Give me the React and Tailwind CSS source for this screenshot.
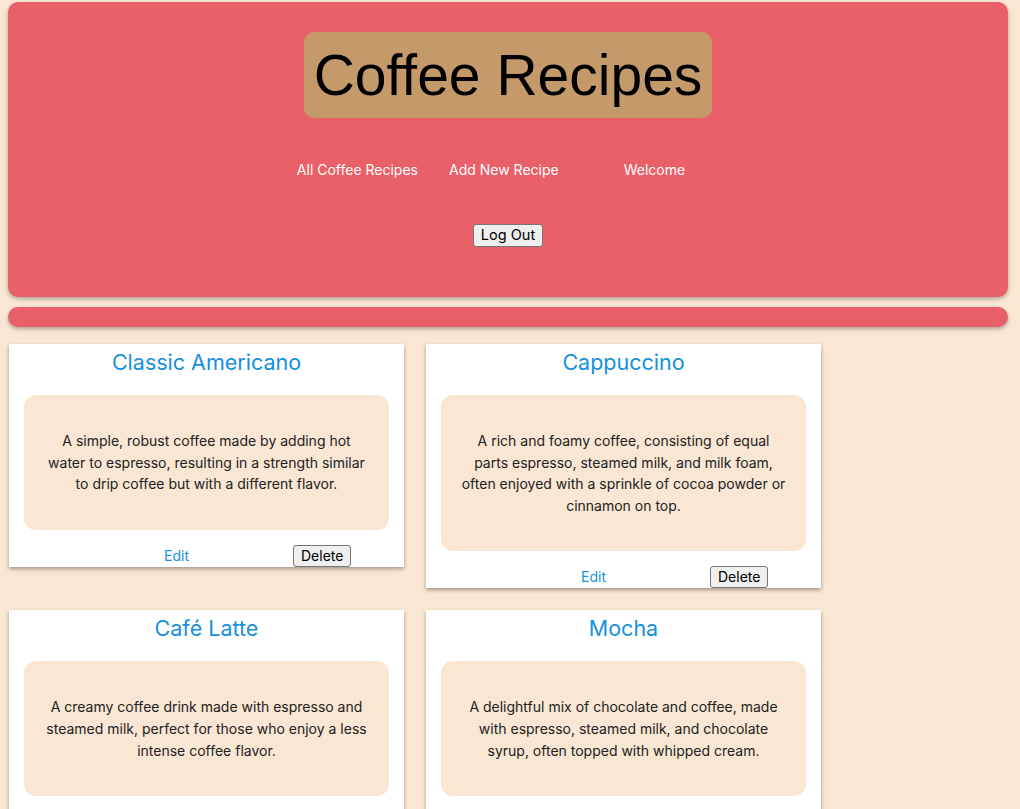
import React from "react";

const recipes = [
    {
        name: "Classic Americano",
        description:
            "A simple, robust coffee made by adding hot water to espresso, resulting in a strength similar to drip coffee but with a different flavor.",
    },
    {
        name: "Cappuccino",
        description:
            "A rich and foamy coffee, consisting of equal parts espresso, steamed milk, and milk foam, often enjoyed with a sprinkle of cocoa powder or cinnamon on top.",
    },
    {
        name: "Café Latte",
        description:
            "A creamy coffee drink made with espresso and steamed milk, perfect for those who enjoy a less intense coffee flavor.",
    },
    {
        name: "Mocha",
        description:
            "A delightful mix of chocolate and coffee, made with espresso, steamed milk, and chocolate syrup, often topped with whipped cream.",
    },
];

const RecipeCard = ({ recipe }) => {
    return (
        <div className="bg-white shadow-[0_2px_4px_rgba(0,0,0,0.35)]">
            <h2 className="mt-[5px] text-center text-[21.5px] leading-[26px] text-[#1590db]">
                {recipe.name}
            </h2>

            <div className="mx-[15px] mt-[20px] rounded-xl bg-[#f9e6d3] px-5 py-[35px]">
                <p className="text-center text-[14px] leading-[21.6px] text-[#222]">
                    {recipe.description}
                </p>
            </div>

            <div className="mt-[15px] flex h-[22px] items-center gap-[104px] pl-[155px]">
                <a href="#" className="text-[14px] leading-none text-[#1590db]">
                    Edit
                </a>
                <button className="h-[22px] rounded-[3px] border border-[#767676] bg-[#efefef] px-[7px] text-[14px] leading-none text-black">
                    Delete
                </button>
            </div>
        </div>
    );
};

const App = () => {
    return (
        <div className="min-h-screen bg-[#f9e6d3] pb-10 font-['Inter',sans-serif]">
            <header className="ml-2 mr-3 pt-[2px]">
                <div className="flex flex-col items-center rounded-[10px] bg-[#ea6068] pb-[50px] pt-[30px] shadow-[0_2px_4px_rgba(0,0,0,0.3)]">
                    <div className="flex h-[86px] items-center rounded-[10px] bg-[#c59a6b] px-[10px]">
                        <h1 className="font-['Liberation_Sans',sans-serif] text-[57px] leading-none text-black">
                            Coffee Recipes
                        </h1>
                    </div>

                    <nav className="mt-[43px] flex text-[14px] leading-[17px] text-white">
                        <a href="#" className="mr-[31px]">
                            All Coffee Recipes
                        </a>
                        <a href="#" className="mr-[65px]">
                            Add New Recipe
                        </a>
                        <span className="mr-[34px]">Welcome</span>
                    </nav>

                    <button className="mt-[46px] h-[23px] rounded-[3px] border border-[#767676] bg-[#efefef] px-[7px] text-[14.5px] leading-none text-black">
                        Log Out
                    </button>
                </div>

                <div className="mt-[10px] h-[20px] rounded-[10px] bg-[#ea6068] shadow-[0_2px_4px_rgba(0,0,0,0.3)]" />
            </header>

            <main className="mt-[17px] grid grid-cols-[395px_395px] items-start gap-[22px] pl-[9px]">
                {recipes.map((recipe) => (
                    <RecipeCard key={recipe.name} recipe={recipe} />
                ))}
            </main>
        </div>
    );
};

export default App;
